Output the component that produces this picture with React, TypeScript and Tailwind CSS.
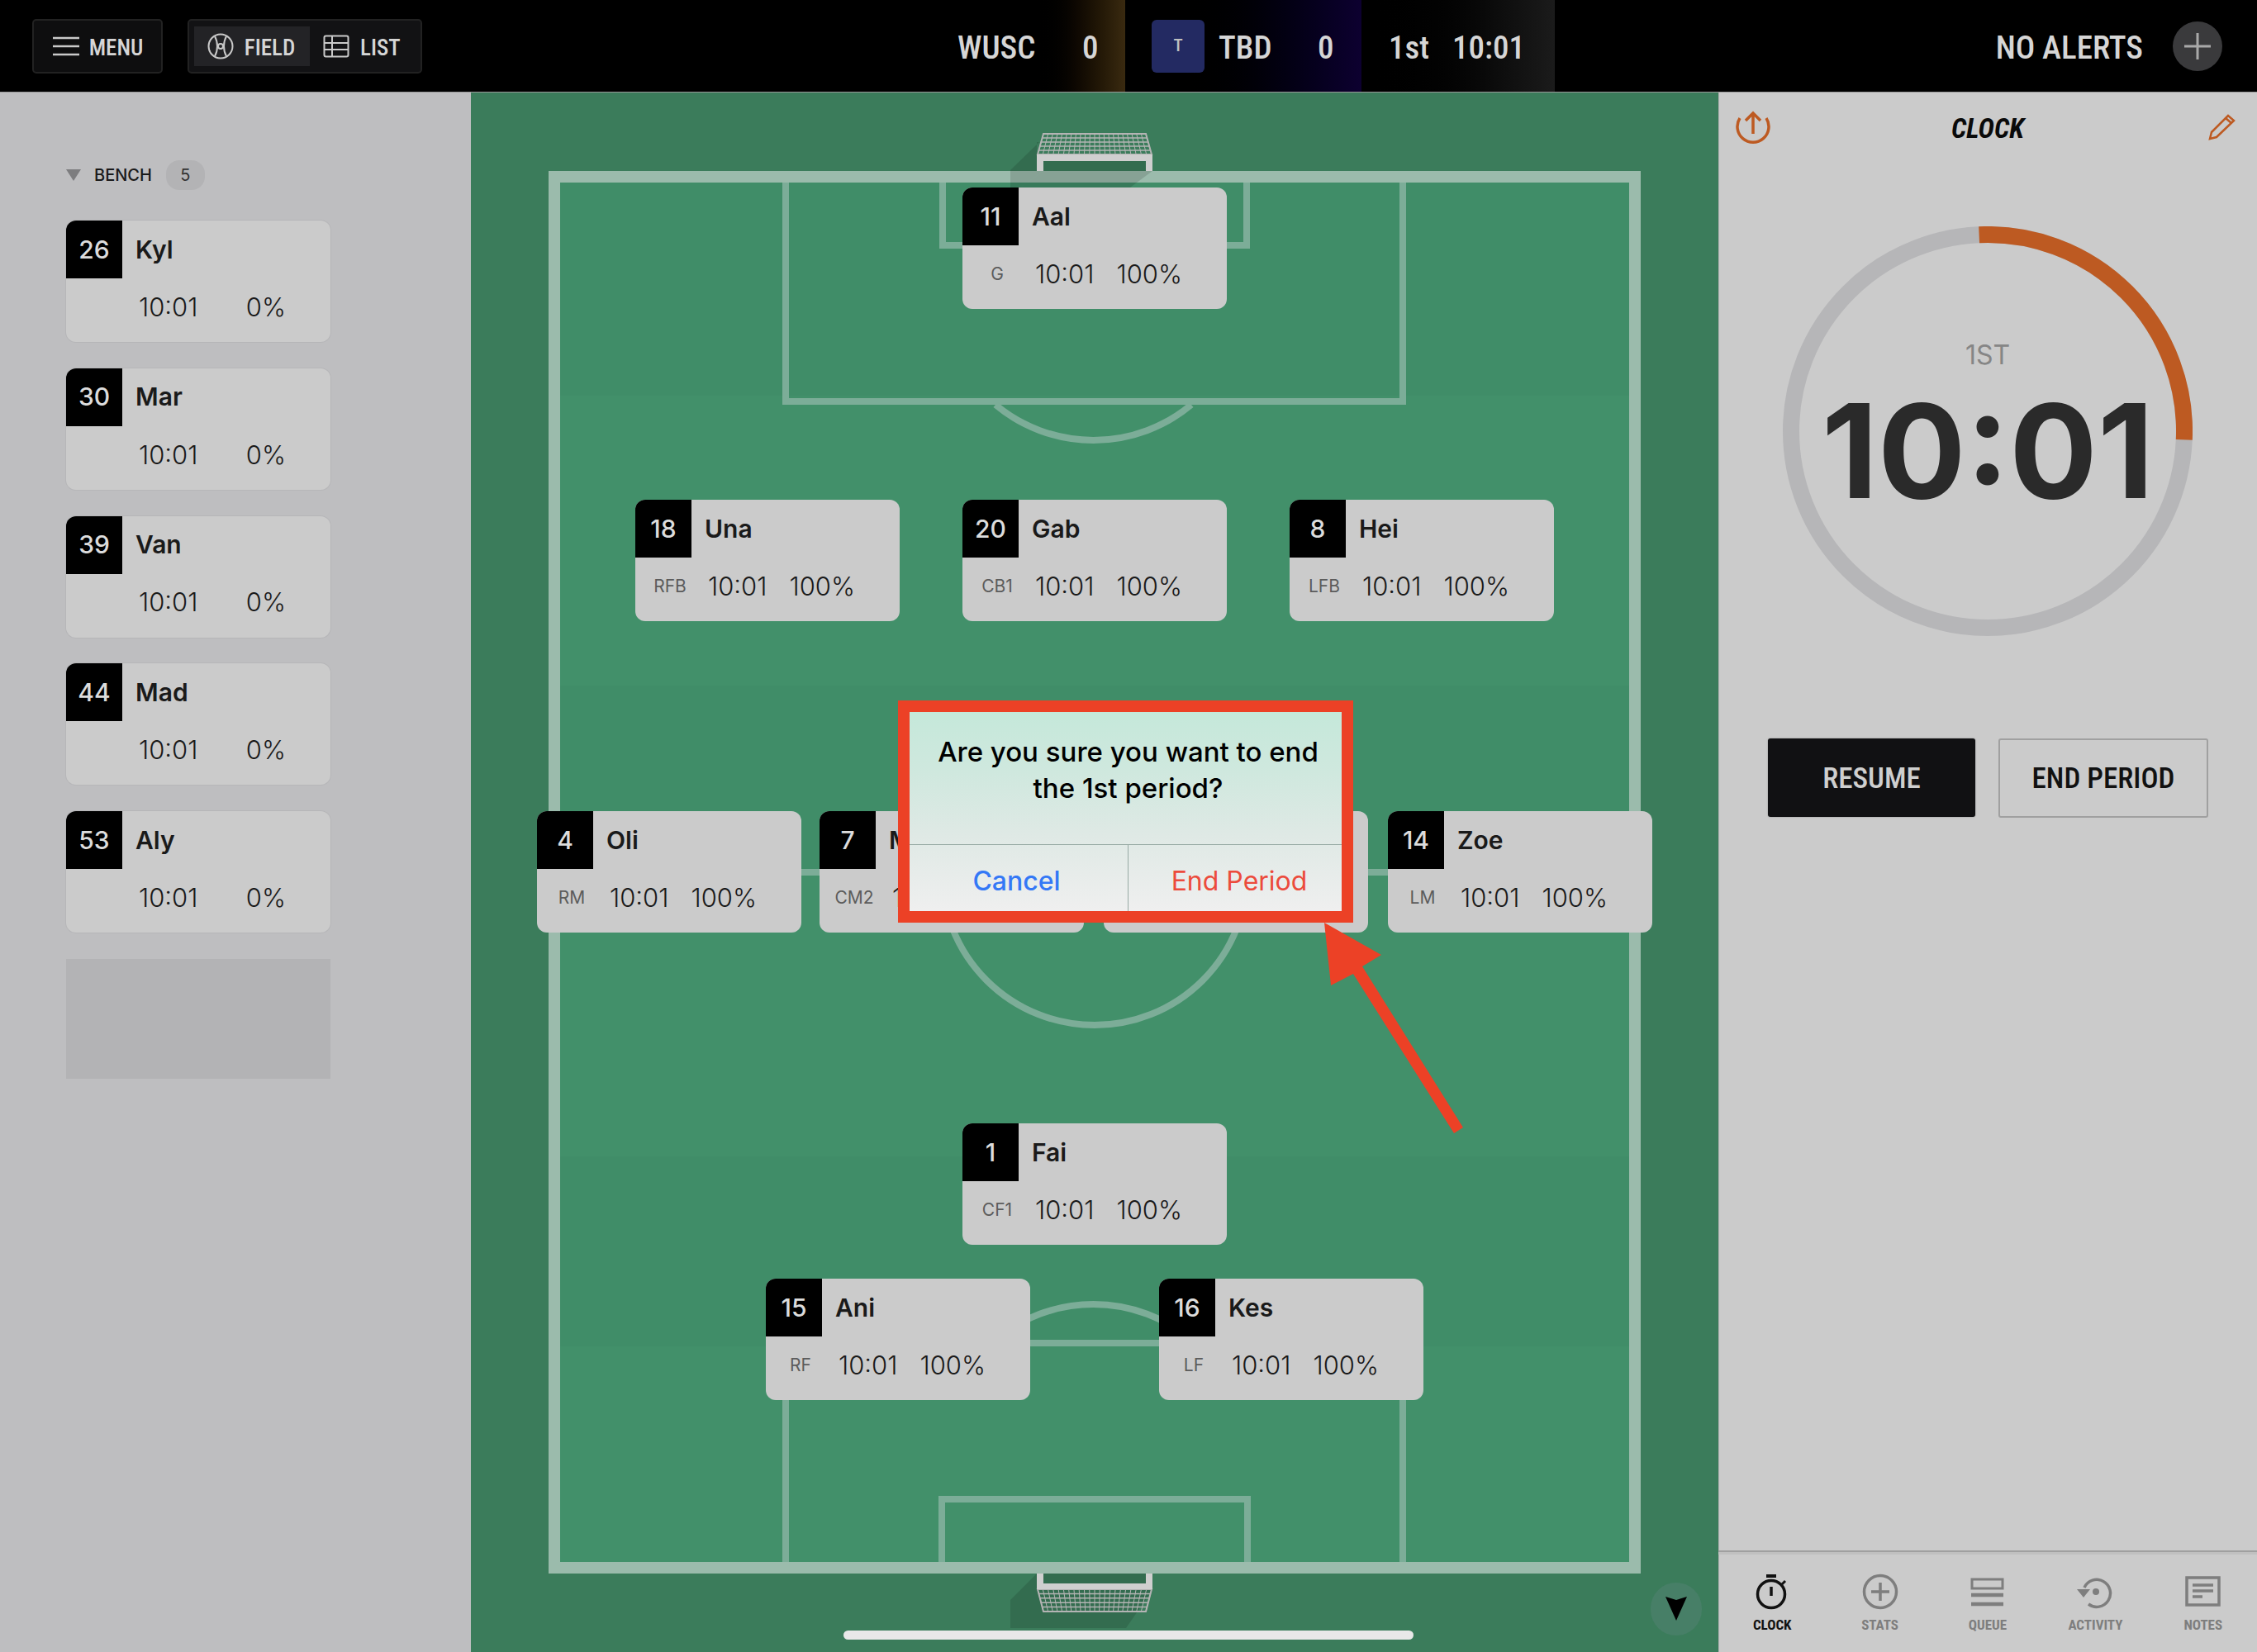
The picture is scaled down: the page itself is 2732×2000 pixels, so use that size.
import React from 'react'

const inter = "font-['Inter',sans-serif]"
const cond = "font-['Roboto',sans-serif] [font-stretch:75%]"

interface Player {
  num: string
  name: string
  pos?: string
  pct: string
}

const BENCH: Player[] = [
  { num: '26', name: 'Kyl', pct: '0%' },
  { num: '30', name: 'Mar', pct: '0%' },
  { num: '39', name: 'Van', pct: '0%' },
  { num: '44', name: 'Mad', pct: '0%' },
  { num: '53', name: 'Aly', pct: '0%' },
]

const FIELD: (Player & { place: string })[] = [
  { num: '11', name: 'Aal', pos: 'G', pct: '100%', place: 'left-[595px] top-[115px]' },
  { num: '18', name: 'Una', pos: 'RFB', pct: '100%', place: 'left-[199px] top-[493px]' },
  { num: '20', name: 'Gab', pos: 'CB1', pct: '100%', place: 'left-[595px] top-[493px]' },
  { num: '8', name: 'Hei', pos: 'LFB', pct: '100%', place: 'left-[991px] top-[493px]' },
  { num: '4', name: 'Oli', pos: 'RM', pct: '100%', place: 'left-[80px] top-[870px]' },
  { num: '7', name: 'Mia', pos: 'CM2', pct: '100%', place: 'left-[422px] top-[870px]' },
  { num: '6', name: '', pct: '', place: 'left-[766px] top-[870px]' },
  { num: '14', name: 'Zoe', pos: 'LM', pct: '100%', place: 'left-[1110px] top-[870px]' },
  { num: '1', name: 'Fai', pos: 'CF1', pct: '100%', place: 'left-[595px] top-[1248px]' },
  { num: '15', name: 'Ani', pos: 'RF', pct: '100%', place: 'left-[357px] top-[1436px]' },
  { num: '16', name: 'Kes', pos: 'LF', pct: '100%', place: 'left-[833px] top-[1436px]' },
]

function PlayerCard({ p, className }: { p: Player; className?: string }) {
  return (
    <div className={`w-[320px] h-[147px] rounded-[12px] overflow-hidden bg-[#cbcbcb] flex flex-col ${inter} ${className || ''}`}>
      <div className="flex h-[70px]">
        <div className="w-[68px] bg-black text-[#dcdcdc] text-[30px] font-medium flex items-center justify-center">{p.num}</div>
        <div className="pl-[16px] text-[30px] font-semibold text-[#1a1a1a] flex items-center">{p.name}</div>
      </div>
      <div className="flex items-center h-[70px] text-[31px] font-light text-[#1a1a1a]">
        <span className="w-[84px] text-center text-[21px] font-normal text-[#5c5c5c]">{p.pos}</span>
        <span className="ml-[4px] w-[75px]">{p.name ? '10:01' : ''}</span>
        <span className="w-[103px] text-right">{p.pct}</span>
      </div>
    </div>
  )
}

function PitchDrawing() {
  // svg coords are the field's own: origin at page (570,112)
  const line = '#7cad98'
  return (
    <svg className="absolute inset-0" width="1510" height="1888" viewBox="570 112 1510 1888">
      <rect x="570" y="112" width="1510" height="1888" fill="#3b7c5b" />
      <rect x="664" y="207" width="1322" height="1698" fill="#42906a" />
      <rect x="678" y="221" width="1294" height="258" fill="#408d68" />
      <rect x="678" y="830" width="1294" height="226" fill="#408d68" />
      <rect x="678" y="1400" width="1294" height="230" fill="#408d68" />
      <g fill="none" stroke={line} strokeWidth="8">
        <path d="M951 214V486H1698V214" />
        <path d="M1141 214V297H1509V214" />
        <path d="M951 1898V1626H1698V1898" />
        <path d="M1140 1898V1815H1510V1898" />
        <path d="M1205 490A185 185 0 0 0 1442 490" />
        <path d="M1205 1622A185 185 0 0 1 1442 1622" />
        <path d="M671 1056H1979" />
        <circle cx="1325" cy="1056" r="185" />
      </g>
      <rect x="671" y="214" width="1308" height="1684" fill="none" stroke="#9bbbac" strokeWidth="14" />
      {/* goal shadows */}
      <g fill="#000" fillOpacity="0.13">
        <path d="M1258 172L1223 206V227H1235L1263 207V195H1387V207H1255V172Z" />
        <path d="M1263 207H1395L1368 227H1235Z" />
        <path d="M1255 1905L1223 1937V1971H1363L1395 1925H1263V1905Z" />
        <path d="M1263 1905H1387V1917H1263Z" />
      </g>
      <Net y0={162} y1={187} flip={false} />
      <path d="M1255 207V187H1395V207H1387V195H1263V207Z" fill="#cfcfcf" />
      <Net y0={1924} y1={1951} flip />
      <path d="M1255 1905V1924H1395V1905H1387V1917H1263V1905Z" fill="#cfcfcf" />
    </svg>
  )
}

function Net({ y0, y1, flip }: { y0: number; y1: number; flip: boolean }) {
  const wide = flip ? y0 : y1
  const narrow = flip ? y1 : y0
  const verts = Array.from({ length: 23 }, (_, i) => i / 22)
  const hors = Array.from({ length: 6 }, (_, i) => i / 5)
  return (
    <g stroke="#b4b4b4" strokeWidth="1" fill="none">
      <path d={`M1256 ${wide}L1263 ${narrow}H1387L1394 ${wide}Z`} strokeWidth="2" />
      {verts.map((t) => (
        <path key={t} d={`M${1256 + 138 * t} ${wide}L${1263 + 124 * t} ${narrow}`} />
      ))}
      {hors.map((t) => (
        <path key={t} d={`M${1256 + 7 * t} ${wide + (narrow - wide) * t}H${1394 - 7 * t}`} strokeWidth="1.5" />
      ))}
    </g>
  )
}

function NavIcon({ name }: { name: string }) {
  if (name === 'CLOCK')
    return (
      <svg width="44" height="44" viewBox="0 0 44 44" fill="none" stroke="#111" strokeWidth="3.5">
        <circle cx="21" cy="25" r="16.5" />
        <path d="M15 3H27" strokeWidth="4" />
        <path d="M21 16V27" />
        <path d="M34 13L38 9" strokeWidth="3" />
      </svg>
    )
  if (name === 'STATS')
    return (
      <svg width="44" height="44" viewBox="0 0 44 44" fill="none" stroke="#7e7e7e" strokeWidth="3.5">
        <circle cx="22" cy="22" r="19.5" />
        <path d="M22 11V33M11 22H33" />
      </svg>
    )
  if (name === 'QUEUE')
    return (
      <svg width="44" height="44" viewBox="0 0 44 44" fill="none" stroke="#7e7e7e">
        <rect x="3" y="7" width="37" height="11" strokeWidth="3" />
        <path d="M2 26H41M2 37H41" strokeWidth="4.5" />
      </svg>
    )
  if (name === 'ACTIVITY')
    return (
      <svg width="44" height="44" viewBox="0 0 44 44" fill="none" stroke="#7e7e7e" strokeWidth="3.5">
        <path d="M9 17A16.5 16.5 0 1 1 14 37" />
        <path d="M0 19H16L8 29Z" fill="#7e7e7e" stroke="none" />
        <circle cx="23" cy="22" r="4" fill="#7e7e7e" stroke="none" />
      </svg>
    )
  return (
    <svg width="44" height="44" viewBox="0 0 44 44" fill="none" stroke="#7e7e7e">
      <rect x="2" y="5" width="39" height="33" strokeWidth="3.5" />
      <path d="M9 14H34M9 21H34" strokeWidth="3.5" />
      <path d="M9 28H21" strokeWidth="3.5" />
    </svg>
  )
}

function Header() {
  return (
    <div className={`h-[112px] bg-black border-b border-[#9a9a9a] flex items-center relative text-[#d6d6d6] font-medium ${cond}`}>
      <div className="flex items-center gap-[30px] pl-[39px] w-[1160px]">
        <div className="w-[158px] h-[66px] bg-[#0e0e0f] border-2 border-[#222] rounded-[5px] flex items-center justify-center gap-[12px] text-[27px]">
          <svg className="ml-[1px]" width="32" height="24" viewBox="0 0 32 24" stroke="#c9c9c9" strokeWidth="2.5">
            <path d="M0 2H32M0 12H32M0 22H32" />
          </svg>
          <span className="pt-[5px]">MENU</span>
        </div>
        <div className="w-[284px] h-[66px] bg-[#121214] border-2 border-[#222] rounded-[5px] flex items-center px-[7px] text-[27px]">
          <div className="w-[140px] h-[48px] bg-[#232326] flex items-center justify-center gap-[13px] -ml-[1px]">
            <svg className="-ml-[2px]" width="32" height="32" viewBox="0 0 32 32" fill="none" stroke="#c9c9c9" strokeWidth="2">
              <circle cx="16" cy="16" r="14.5" />
              <path d="M9 4C13 11 13 21 9 28M23 4C19 11 19 21 23 28" />
              <circle cx="16" cy="16" r="3" />
            </svg>
            <span className="pt-[5px]">FIELD</span>
          </div>
          <div className="flex items-center gap-[13px] pl-[16px]">
            <svg width="32" height="28" viewBox="0 0 32 28" fill="none" stroke="#c9c9c9" strokeWidth="2">
              <rect x="1.5" y="1.5" width="29" height="25" rx="2" />
              <path d="M1.5 10H30.5M1.5 18H30.5M11 1.5V26.5" />
            </svg>
            <span className="pt-[5px]">LIST</span>
          </div>
        </div>
      </div>
      {/* scoreboard */}
      <div className="absolute left-[1160px] top-0 h-[111px] w-[722px] flex text-[39px]">
        <div className="w-[202px] flex items-center bg-gradient-to-r from-black from-[45%] to-[#3a2a10]">
          <span className="w-[151px] pt-[5px] -ml-[1px]">WUSC</span>
          <span className="pt-[5px]">0</span>
        </div>
        <div className="w-[286px] flex items-center pl-[32px] bg-gradient-to-r from-black from-[20%] to-[#0d0030]">
          <div className="w-[64px] h-[64px] rounded-[6px] bg-[#232a62] text-[21px] text-[#c0c0c0] flex items-center justify-center">T</div>
          <span className="ml-[17px] w-[120px] pt-[5px]">TBD</span>
          <span className="pt-[5px]">0</span>
        </div>
        <div className="w-[234px] flex items-center pl-[33px] gap-[28px] bg-gradient-to-r from-black to-[#1b1b1b]">
          <span className="pt-[5px]">1st</span>
          <span className="pt-[5px]">10:01</span>
        </div>
      </div>
      <div className="ml-auto flex items-center pr-[42px] gap-[36px]">
        <span className="text-[39px] pt-[5px]">NO ALERTS</span>
        <div className="w-[60px] h-[60px] rounded-full bg-[#3a3a3c] flex items-center justify-center">
          <svg width="32" height="32" viewBox="0 0 32 32" stroke="#a9a9a9" strokeWidth="3">
            <path d="M16 0V32M0 16H32" />
          </svg>
        </div>
      </div>
    </div>
  )
}

function Bench() {
  return (
    <div className="w-[570px] bg-[#bebec0] pl-[80px] pt-[82px] shrink-0">
      <div className={`flex items-center h-[36px] ${inter}`}>
        <svg width="18" height="14" viewBox="0 0 18 14" fill="#7d7d7f"><path d="M0 0H18L9 14Z" /></svg>
        <span className="ml-[16px] text-[20px] font-medium text-[#1a1a1a]">BENCH</span>
        <span className="ml-[17px] w-[47px] h-[36px] rounded-[16px] bg-[#b3b3b5] flex items-center justify-center text-[20px] text-[#333]">5</span>
      </div>
      <div className="flex flex-col gap-[31.75px] mt-[37px]">
        {BENCH.map((p) => (
          <PlayerCard key={p.num} p={p} className="shadow-[0_0_0_1px_#b6b6b8]" />
        ))}
        <div className="w-[320px] h-[145px] bg-[#b3b3b5]" />
      </div>
    </div>
  )
}

function ClockPanel() {
  const tabs = ['CLOCK', 'STATS', 'QUEUE', 'ACTIVITY', 'NOTES']
  return (
    <div className="w-[652px] shrink-0 bg-[#cbcbcb] shadow-[inset_1px_0_0_#b0b0b0] flex flex-col">
      <div className="h-[66px] relative flex items-center justify-between pl-[21px] pr-[25px] pt-[16px]">
        <svg width="42" height="42" viewBox="0 0 42 42" fill="none" stroke="#bd5a22" strokeWidth="3.5">
          <path d="M5 11A19 19 0 1 0 37 11" />
          <path d="M21 30V5M12 14L21 5L30 14" />
        </svg>
        <span className={`-ml-[4px] pt-[5px] text-[33px] font-bold italic text-[#0a0a0a] ${cond}`}>CLOCK</span>
        <svg width="34" height="34" viewBox="0 0 34 34" fill="none" stroke="#bd5a22" strokeWidth="2.5">
          <path d="M2 32L4 24L24 4L31 10L10 30Z" />
          <path d="M21 7L28 13" />
        </svg>
      </div>
      <div className="relative h-[496px] w-[496px] ml-[78px] mt-[96px]">
        <svg className="absolute inset-0" width="496" height="496" viewBox="0 0 496 496" fill="none" strokeWidth="20">
          <circle cx="248" cy="248" r="238" stroke="#b6b6b8" />
          <path d="M237.6 10.2A238 238 0 0 1 485.8 258.4" stroke="#bd5a22" />
        </svg>
        <div className={`absolute inset-0 flex flex-col items-center ${inter}`}>
          <span className="mt-[136px] text-[32px] text-[#868686] leading-[40px]">1ST</span>
          <span className="mt-[11px] text-[158px] leading-[170px] font-bold text-[#2a2a2a]">10:01</span>
        </div>
      </div>
      <div className={`flex gap-[28px] ml-[60px] mt-[124px] text-[35px] font-medium ${cond}`}>
        <div className="w-[251px] h-[95px] pt-[3px] bg-[#111113] rounded-[3px] text-[#cfcfcf] flex items-center justify-center shadow-[0_0_2px_#888]">RESUME</div>
        <div className="w-[254px] h-[96px] pt-[3px] border-2 border-[#a0a0a0] rounded-[3px] text-[#111] flex items-center justify-center">END PERIOD</div>
      </div>
      <div className="mt-auto h-[123px] border-t-2 border-[#a0a0a0] shadow-[inset_0_3px_0_#c0c0c0] grid grid-cols-5">
        {tabs.map((t) => (
          <div key={t} className="flex flex-col items-center pt-[26px]">
            <NavIcon name={t} />
            <span className={`mt-[6px] text-[17px] font-bold ${cond} ${t === 'CLOCK' ? 'text-[#111]' : 'text-[#7e7e7e]'}`}>{t}</span>
          </div>
        ))}
      </div>
    </div>
  )
}

function Dialog() {
  return (
    <div className={`absolute left-[1087px] top-[848px] w-[551px] h-[269px] border-[14px] border-[#ec4126] bg-[linear-gradient(to_bottom,#c5e8da_0%,#cfe8de_30%,#dfe9e5_62%,#efefef_100%)] flex flex-col ${inter}`}>
      <div className="h-[160px] pt-[26px] pl-[6px] text-center text-[33px] leading-[44px] font-medium text-black">
        Are you sure you want to end
        <br />
        the 1st period?
      </div>
      <div className="flex-1 flex border-t border-[#97aaa4] text-[32px] pt-[8px]">
        <div className="w-[265px] pr-[5px] -mt-[8px] pt-[8px] flex items-center justify-center font-medium text-[#3478f6] border-r border-[#97aaa4]">Cancel</div>
        <div className="flex-1 pl-[10px] flex items-center justify-center text-[#ec4b3c]">End Period</div>
      </div>
    </div>
  )
}

export default function App() {
  return (
    <div className="relative w-[2732px] h-[2000px] overflow-hidden flex flex-col">
      <Header />
      <div className="flex flex-1">
        <Bench />
        <div className="relative flex-1">
          <PitchDrawing />
          {FIELD.map((p) => (
            <PlayerCard key={p.num} p={p} className={`absolute ${p.place}`} />
          ))}
          <div className="absolute left-[1428px] top-[1804px] w-[62px] h-[64px] rounded-full bg-[#477f67] flex items-center justify-center">
            <svg width="26" height="30" viewBox="0 0 26 30"><path d="M0 0L13 4L26 0L13 29Z" fill="#000" /></svg>
          </div>
        </div>
        <ClockPanel />
      </div>
      <Dialog />
      <svg className="absolute inset-0 pointer-events-none" width="2732" height="2000" viewBox="0 0 2732 2000">
        <path d="M1603 1117L1672 1156L1649 1170L1771 1365L1760 1372L1638 1179L1611 1193Z" fill="#ec4126" />
      </svg>
      <div className="absolute left-[1021px] top-[1974px] w-[690px] h-[11px] rounded-full bg-[#e8e8e8]" />
    </div>
  )
}
